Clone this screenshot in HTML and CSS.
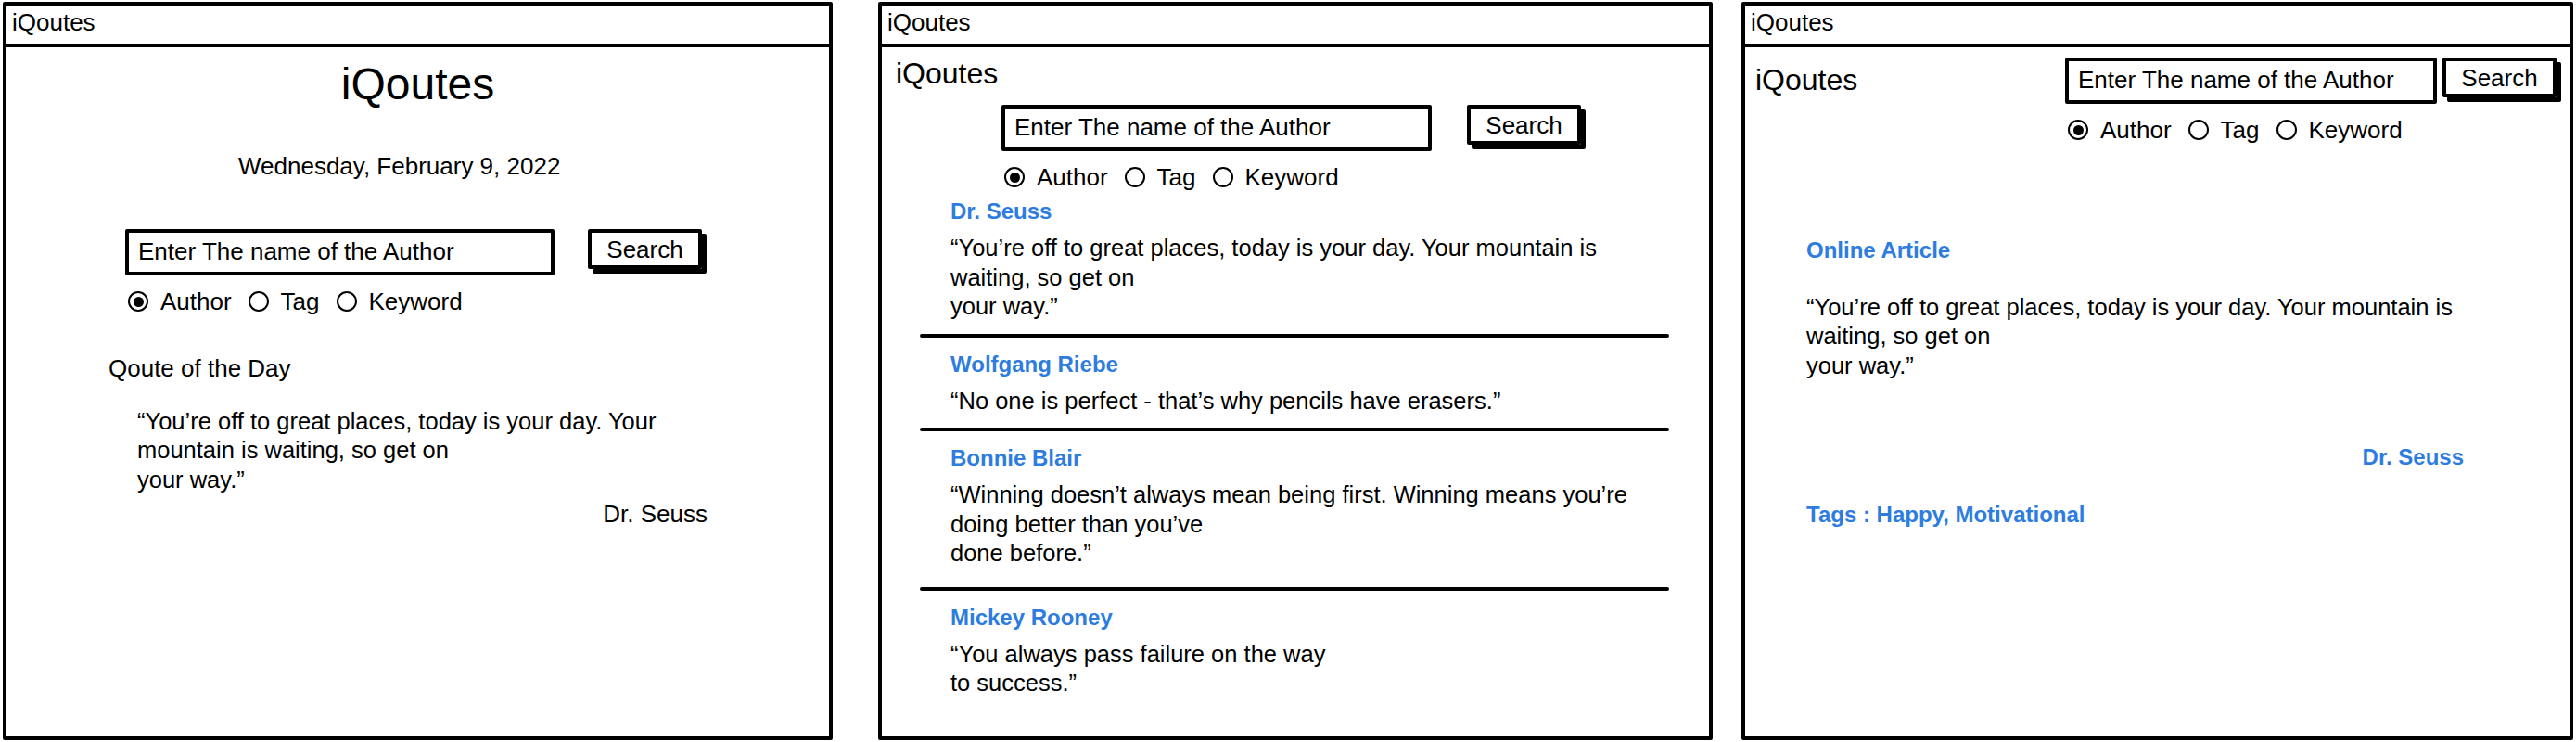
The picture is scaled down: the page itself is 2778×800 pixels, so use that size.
FILE: index.html
```html
<!DOCTYPE html>
<html lang="en">
<head>
<meta charset="utf-8">
<title>iQoutes wireframes</title>
<link rel="stylesheet" href="styles.css">
</head>
<body>
<div class="board">

  <section class="window w1">
    <div class="titlebar">iQoutes</div>
    <h1 class="brand-lg">iQoutes</h1>
    <p class="date">Wednesday, February 9, 2022</p>
    <div class="search">
      <div class="searchrow">
        <div class="textbox">Enter The name of the Author</div>
        <div class="btn">Search</div>
      </div>
      <div class="radios">
        <span class="radio on"></span><span class="radio-label">Author</span>
        <span class="radio"></span><span class="radio-label">Tag</span>
        <span class="radio"></span><span class="radio-label">Keyword</span>
      </div>
    </div>
    <h2 class="qotd">Qoute of the Day</h2>
    <p class="quote">“You’re off to great places, today is your day. Your<br>mountain is waiting, so get on<br>your way.”</p>
    <p class="author">Dr. Seuss</p>
  </section>

  <section class="window w2">
    <div class="titlebar">iQoutes</div>
    <h2 class="brand">iQoutes</h2>
    <div class="search">
      <div class="searchrow">
        <div class="textbox">Enter The name of the Author</div>
        <div class="btn">Search</div>
      </div>
      <div class="radios">
        <span class="radio on"></span><span class="radio-label">Author</span>
        <span class="radio"></span><span class="radio-label">Tag</span>
        <span class="radio"></span><span class="radio-label">Keyword</span>
      </div>
    </div>
    <div class="results">
      <div class="name">Dr. Seuss</div>
      <p class="quote">“You’re off to great places, today is your day. Your mountain is<br>waiting, so get on<br>your way.”</p>
      <div class="sep"></div>
      <div class="name">Wolfgang Riebe</div>
      <p class="quote">“No one is perfect - that’s why pencils have erasers.”</p>
      <div class="sep"></div>
      <div class="name">Bonnie Blair</div>
      <p class="quote">“Winning doesn’t always mean being first. Winning means you’re<br>doing better than you’ve<br>done before.”</p>
      <div class="sep sep-loose"></div>
      <div class="name">Mickey Rooney</div>
      <p class="quote">“You always pass failure on the way<br>to success.”</p>
    </div>
  </section>

  <section class="window w3">
    <div class="titlebar">iQoutes</div>
    <div class="top3">
      <h2 class="brand">iQoutes</h2>
      <div class="search">
        <div class="searchrow">
          <div class="textbox">Enter The name of the Author</div>
          <div class="btn">Search</div>
        </div>
        <div class="radios">
          <span class="radio on"></span><span class="radio-label">Author</span>
          <span class="radio"></span><span class="radio-label">Tag</span>
          <span class="radio"></span><span class="radio-label">Keyword</span>
        </div>
      </div>
    </div>
    <div class="article">
      <div class="name source">Online Article</div>
      <p class="quote">“You’re off to great places, today is your day. Your mountain is<br>waiting, so get on<br>your way.”</p>
      <div class="name by">Dr. Seuss</div>
      <div class="name tags">Tags : Happy, Motivational</div>
    </div>
  </section>

</div>
</body>
</html>
```

FILE: styles.css
```css
* {
  box-sizing: border-box;
  margin: 0;
  padding: 0;
}

html, body {
  background: #fff;
}

body {
  width: 2778px;
  height: 800px;
  overflow: hidden;
  padding: 2px 0 0 3px;
  font-family: "Liberation Sans", Arial, sans-serif;
  font-size: 26px;
  line-height: 32px;
  color: #000;
}

.board {
  display: flex;
  align-items: flex-start;
}

.window {
  height: 796px;
  border: 4px solid #000;
  border-radius: 2px;
  display: flex;
  flex-direction: column;
  flex: none;
}

.w1 { width: 895px; }
.w2 { width: 900px; margin-left: 49px; }
.w3 { width: 897px; margin-left: 31px; }

.titlebar {
  height: 45px;
  border-bottom: 4px solid #000;
  padding-left: 6px;
  line-height: 36px;
  flex: none;
}

/* headings */
.brand-lg {
  font-size: 48px;
  line-height: 56px;
  font-weight: 400;
  text-align: center;
  margin-top: 12px;
}

.brand {
  font-size: 32px;
  line-height: 40px;
  font-weight: 400;
}

.date {
  margin-top: 44px;
  padding-left: 250px;
}

/* search component */
.searchrow {
  display: flex;
  align-items: flex-start;
}

.textbox {
  height: 50px;
  border: 4px solid #000;
  border-radius: 2px;
  padding: 0 10px 3px;
  line-height: 40px;
  white-space: nowrap;
  flex: none;
}

.btn {
  width: 123px;
  height: 43px;
  border: 4px solid #000;
  border-radius: 2px;
  box-shadow: 5px 5px 0 #000;
  text-align: center;
  line-height: 37px;
  flex: none;
}

.radios {
  display: flex;
  align-items: center;
  height: 30px;
  line-height: 30px;
  margin-top: 13px;
  padding-left: 3px;
}

.radio {
  width: 22px;
  height: 22px;
  border: 2.5px solid #000;
  border-radius: 50%;
  margin-right: 13px;
  flex: none;
  display: flex;
  align-items: center;
  justify-content: center;
}

.radio.on::after {
  content: "";
  width: 11px;
  height: 11px;
  border-radius: 50%;
  background: #000;
}

.radio-label {
  margin-right: 18px;
}

/* panel 1 */
.w1 .search {
  margin-top: 52px;
  padding-left: 128px;
}
.w1 .textbox { width: 463px; }
.w1 .btn { margin-left: 36px; }

.qotd {
  font-size: 26px;
  font-weight: 400;
  line-height: 32px;
  margin-top: 41px;
  padding-left: 110px;
}

.quote {
  font-size: 25.5px;
  line-height: 31.5px;
  white-space: nowrap;
}

.w1 .quote {
  margin-top: 25.5px;
  padding-left: 141px;
}

.w1 .author {
  margin-top: 5px;
  text-align: right;
  padding-right: 131px;
}

/* panel 2 */
.w2 .brand {
  margin-top: 8px;
  padding-left: 15px;
}
.w2 .search {
  margin-top: 14px;
  padding-left: 129px;
}
.w2 .textbox { width: 464px; }
.w2 .btn { margin-left: 38px; }

.name {
  color: #2d7ce0;
  font-weight: 700;
  font-size: 24px;
  line-height: 32px;
  white-space: nowrap;
}

.results {
  margin-top: 6px;
  padding-left: 74px;
}

.results .quote {
  margin-top: 8px;
}

.sep {
  width: 808px;
  height: 4px;
  background: #000;
  border-radius: 2px;
  margin: 13px 0 13px -33px;
}

.sep.sep-loose {
  margin-top: 20px;
}

/* panel 3 */
.top3 {
  display: flex;
  align-items: flex-start;
}

.w3 .brand {
  width: 334px;
  margin-left: 11px;
  margin-top: 15px;
  flex: none;
}

.w3 .search {
  margin-top: 11px;
}
.w3 .textbox { width: 401px; }
.w3 .btn { margin-left: 6px; }

.article {
  padding-left: 66px;
}

.article .source {
  margin-top: 99px;
}

.article .quote {
  margin-top: 29.5px;
}

.article .by {
  margin-top: 67px;
  text-align: right;
  padding-right: 114px;
}

.article .tags {
  margin-top: 30px;
}
```
